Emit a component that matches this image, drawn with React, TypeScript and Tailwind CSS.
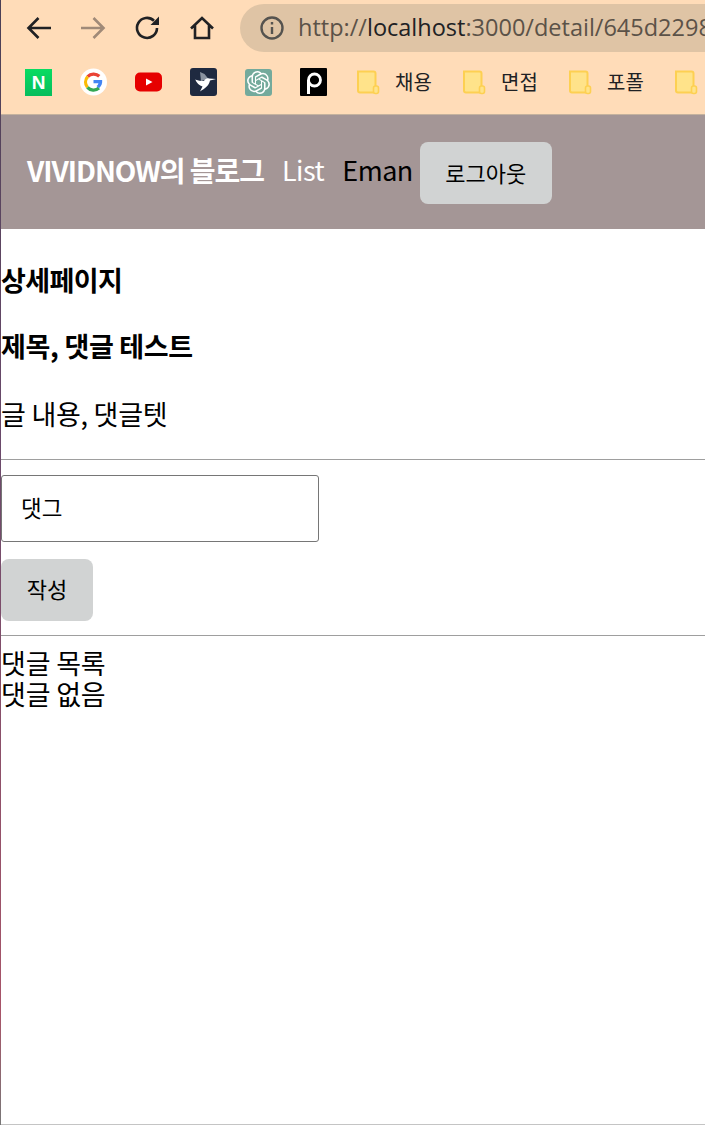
import React from "react";
import { SiOpenai } from "react-icons/si";

const font = { fontFamily: '"Noto Sans CJK KR","Noto Sans",sans-serif' };

function Folder() {
  return (
    <svg width="26" height="26" viewBox="0 0 26 26" className="shrink-0">
      <path d="M3 2.500h15.500a2 2 0 0 1 2 2V23.500H5a2 2 0 0 1-2-2z" fill="#ffe38a" stroke="#fdd052" strokeWidth="2" />
      <rect x="18.500" y="17" width="5" height="7.500" rx="2" fill="#ffe38a" stroke="#fdd052" strokeWidth="1.600" />
    </svg>
  );
}

function Bookmark({ label }: { label: string }) {
  return (
    <div className="flex w-[106px] items-center">
      <Folder />
      <span className="ml-[14px] text-[20px] leading-none text-[#202124]">{label}</span>
    </div>
  );
}

export default function App() {
  return (
    <div className="h-[1125px] w-[705px] overflow-hidden bg-[linear-gradient(180deg,#4b3f55_0%,#6b4a6b_40%,#a85468_90%,#777777_100%)] pl-px text-black" style={font}>
      <div className="flex h-[1125px] flex-col border-b border-[#c4c4c4] bg-white">
        <header className="h-[115px] shrink-0 border-b border-[#c4b29e] bg-[#ffdcb8]">
          <div className="flex h-[56px] items-center">
            <div className="ml-[24px] flex w-[215px] items-center gap-[26px]">
              <svg width="28" height="28" viewBox="0 0 28 28" fill="none" stroke="#202124" strokeWidth="2.600"><path d="M26 14H4M13.500 4 3.500 14l10 10" /></svg>
              <svg width="28" height="28" viewBox="0 0 28 28" fill="none" stroke="#a08a78" strokeWidth="2.600"><path d="M2 14h21M14.500 4l10 10-10 10" /></svg>
              <svg width="28" height="28" viewBox="0 0 28 28" fill="none" stroke="#202124" strokeWidth="2.600"><path d="M24 14a10 10 0 1 1-3-7.200" /><path d="M26 2.500V11h-8.500z" fill="#202124" stroke="none" /></svg>
              <svg width="28" height="28" viewBox="0 0 28 28" fill="none" stroke="#202124" strokeWidth="2.600" className="ml-[1px]"><path d="M3 14.500 14 4l11 10.500M7 11.500V24h14V11.500" /></svg>
            </div>
            <div className="flex h-[48px] flex-1 items-center overflow-hidden rounded-l-full bg-[#dfc4a5] pl-[19px]">
              <svg width="26" height="26" viewBox="0 0 26 26" fill="none" stroke="#55534f" strokeWidth="2.400" className="shrink-0">
                <circle cx="13" cy="13" r="10.500" />
                <path d="M13 12v7M13 7v2.500" />
              </svg>
              <span className="ml-[13px] text-[23.500px] leading-none whitespace-nowrap text-[#5b5248]" style={{ fontFamily: '"Open Sans",sans-serif' }}>
                http://<span className="text-[#202124]">localhost</span>:3000/detail/645d2298
              </span>
            </div>
          </div>
          <div className="mt-[12px] flex items-center">
            <div className="ml-[24px] flex w-[330px] items-center gap-[28px]">
              <div className="flex size-[27px] items-center justify-center bg-[linear-gradient(180deg,#08dc62,#06bd5c)] text-[19px] leading-none font-bold text-white" style={{ fontFamily: '"Liberation Sans",sans-serif' }}>N</div>
              <svg width="27" height="28" viewBox="0 0 28 28">
                <circle cx="14" cy="14" r="14" fill="#fff" />
                <path d="M8 8.500A8.500 8.500 0 0 1 20 8" fill="none" stroke="#ea4335" strokeWidth="3.400" />
                <path d="M7.700 19.500a8.500 8.500 0 0 1 .3-11" fill="none" stroke="#fbbc05" strokeWidth="3.400" />
                <path d="M7.700 19.500a8.500 8.500 0 0 0 12 .8" fill="none" stroke="#34a853" strokeWidth="3.400" />
                <path d="M14 12h9c.3 3.500-.8 6.500-3.300 8.500l-2.600-2.300c1-.7 1.700-1.700 2-3H14z" fill="#4285f4" />
              </svg>
              <svg width="27" height="28" viewBox="0 0 27 28">
                <rect y="4.500" width="27" height="19" rx="5" fill="#e60000" />
                <path d="M11 10.500l6.500 3.500-6.500 3.500z" fill="#fff" />
              </svg>
              <svg width="27" height="28" viewBox="0 0 27 28">
                <rect width="27" height="28" rx="3" fill="#1f2a40" />
                <path d="M10 4l4.500 2 4 5-7.500 2z" fill="#8a93a0" />
                <path d="M5 11.500c3 1 6 1.500 9 1.500 1-2 3-3 5-2.500l7 .5-6 1.500c-1 5-5 8-10 11l2.500-5c-3-1-6-3.500-7.500-7.500z" fill="#fff" />
              </svg>
              <div className="flex size-[27px] items-center justify-center rounded-[3px] bg-[#74aa9c] text-white"><SiOpenai size={23} /></div>
              <svg width="27" height="28" viewBox="0 0 27 28">
                <rect width="27" height="28" rx="1" fill="#000" />
                <circle cx="14.500" cy="12" r="6" fill="none" stroke="#fff" strokeWidth="2.800" />
                <path d="M8.500 12v14" fill="none" stroke="#fff" strokeWidth="3" />
              </svg>
            </div>
            <Bookmark label="채용" />
            <Bookmark label="면접" />
            <Bookmark label="포폴" />
            <Folder />
          </div>
        </header>

        <nav className="flex h-[114px] shrink-0 items-center bg-[#a49696] pl-[26px] text-[27px]">
          <span className="-mt-[4px] text-[28px] font-bold tracking-[-1.050px] text-white">VIVIDNOW의 블로그</span>
          <span className="-mt-[4px] ml-[18px] tracking-[-0.500px] text-white">List</span>
          <span className="-mt-[4px] ml-[18px] tracking-[-0.500px] text-black">Eman</span>
          <button className="mt-[1px] ml-[7px] h-[62px] w-[132px] rounded-lg bg-[#d1d3d3] pb-[1px] text-[22px] whitespace-nowrap">로그아웃</button>
        </nav>

        <main className="flex-1 text-[27px] leading-[31px]">
          <h4 className="mt-[35px] font-bold tracking-[-0.600px]">상세페이지</h4>
          <h4 className="mt-[35px] font-bold tracking-[-0.300px]">제목, 댓글 테스트</h4>
          <p className="mt-[37px] tracking-[-0.250px]">글 내용, 댓글텟</p>
          <hr className="mt-[30px] border-t border-[#9e9e9e]" />
          <input
            defaultValue="댓그"
            className="mt-[15px] block h-[67px] w-[318px] rounded-[3px] border border-[#767676] pb-[4px] pl-[19px] text-[22.500px] outline-none"
          />
          <button className="mt-[17px] block h-[62px] w-[92px] rounded-lg bg-[#d1d3d3] pb-[4px] text-[22px]">작성</button>
          <hr className="mt-[14px] border-t border-[#9e9e9e]" />
          <p className="mt-[11px] tracking-[-0.200px]">댓글 목록</p>
          <p className="tracking-[-0.200px]">댓글 없음</p>
        </main>
      </div>
    </div>
  );
}
